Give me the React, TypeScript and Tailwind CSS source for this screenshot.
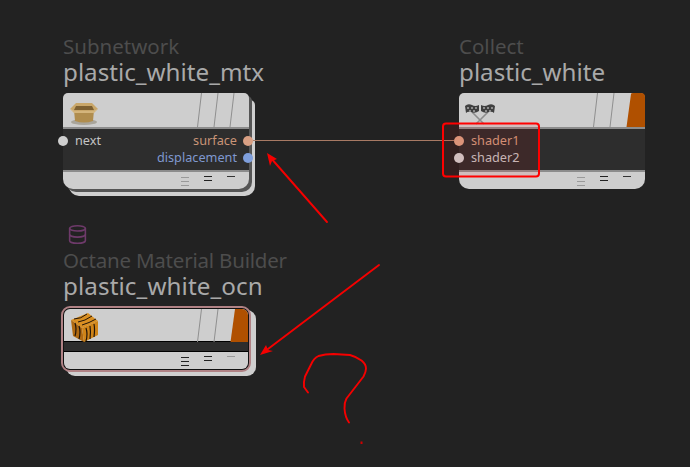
import React from "react";
import { Database } from "lucide-react";

type Port = { name: string; text: string; dot: string };

const BoxIcon = () => (
  <svg width="30" height="26" viewBox="0 0 30 26" className="absolute left-[6px] top-[7px]">
    <ellipse cx="15" cy="22" rx="13" ry="3" fill="#a9a59b" />
    <path d="M5 10 L25 10 L24 21 Q15 24 6 21 Z" fill="#b08d4e" />
    <path d="M1 9 L7 3 L23 3 L29 9 L25 11 L5 11 Z" fill="#c9a76a" />
    <path d="M7 6 L23 6 L25 10 L5 10 Z" fill="#7d6031" />
    <path d="M1 9 L5 11 L25 11 L29 9 L25 13 L5 13 Z" fill="#d4b57c" />
  </svg>
);

const FlagsIcon = () => (
  <svg width="32" height="26" viewBox="0 0 32 26" className="absolute left-[5px] top-[7px]">
    <path d="M8 12 L20 24 M24 12 L12 24" stroke="#8d8d8d" strokeWidth="1.6" />
    <path d="M1 6 Q4 3 8 5 Q11 7 15 5 L15 11 Q11 14 7 12 Q4 11 2 13 Z" fill="#3f3f3f" />
    <path d="M17 5 Q21 7 24 5 Q28 3 31 6 L30 13 Q28 11 25 12 Q21 14 17 11 Z" fill="#3f3f3f" />
    <path d="M3 7 h2 v2 h-2 Z M7 7 h2 v2 h-2 Z M11 7 h2 v2 h-2 Z M5 10 h2 v2 h-2 Z M9 10 h2 v2 h-2 Z M19 7 h2 v2 h-2 Z M23 7 h2 v2 h-2 Z M27 7 h2 v2 h-2 Z M21 10 h2 v2 h-2 Z M25 10 h2 v2 h-2 Z" fill="#8e8e8e" />
  </svg>
);

const TigerIcon = () => (
  <svg width="30" height="32" viewBox="0 0 30 32" className="absolute left-[6px] top-[3px]">
    <path d="M1 8 L18 1 L28 9 L12 16 Z" fill="#d98f22" />
    <path d="M1 8 L12 16 L14 30 L3 24 Z" fill="#b06a12" />
    <path d="M12 16 L28 9 L28 23 L14 30 Z" fill="#cf8418" />
    <path d="M4 7 Q11 7 17 2 M8 10 Q15 9 22 4 M12 13 Q19 11 26 7" stroke="#22150a" strokeWidth="1" fill="none" />
    <path d="M5 11 Q7 17 5 24 M9 14 Q11 20 9 27 M16 16 Q18 22 16 29 M20 14 Q21 20 20 27 M24 12 Q25 17 24 25" stroke="#22150a" strokeWidth="1.2" fill="none" />
  </svg>
);

const FooterBars = ({ dark }: { dark?: boolean }) => {
  const first = dark ? "bg-[#222222]" : "bg-[#9a9a9a]";
  const last = dark ? "bg-[#9a9a9a]" : "bg-[#333333]";
  return (
    <div className={`h-full pt-[4px] flex items-start gap-[15px] ${dark ? "pl-[117px]" : "pl-[118px]"}`}>
      <div className="flex flex-col gap-[3px] w-[8px] pt-px">
        <div className={`h-px ${first}`} />
        <div className={`h-px ${first}`} />
        <div className={`h-px ${first}`} />
      </div>
      <div className="flex flex-col gap-[3px] w-[8px]">
        <div className="h-px bg-[#222222]" />
        <div className="h-px bg-[#222222]" />
      </div>
      <div className="w-[8px] h-px">
        <div className={`h-px ${last}`} />
      </div>
    </div>
  );
};

const PortLabel = ({ port, right }: { port: Port; right?: boolean }) => (
  <span className={port.text}>
    {port.name}
    <span
      className={`absolute top-[4px] size-[10px] rounded-full ${right ? "right-[-4px]" : "left-[-5px]"} ${port.dot}`}
    />
  </span>
);

const PortRow = ({ left, right }: { left?: Port; right?: Port }) => (
  <div className="relative h-[17px] pl-[12px] pr-[12px] flex justify-between text-[12.7px] leading-[17px]">
    <span>{left && <PortLabel port={left} />}</span>
    <span>{right && <PortLabel port={right} right />}</span>
  </div>
);

const NodeLabel = ({ type, name, wide }: { type: string; name: string; wide?: boolean }) => (
  <div className={`whitespace-nowrap ${wide ? "mb-[7px]" : "mb-[8px]"}`}>
    <div className={`text-[20.5px] leading-[25px] text-[#4d4d4d] ${wide ? "tracking-[-0.2px]" : ""}`}>{type}</div>
    <div className={`text-[24.2px] leading-[26px] text-[#a9a9a9] ${wide ? "tracking-[0.1px]" : ""}`}>{name}</div>
  </div>
);

const App = () => {
  const surface = { name: "surface", text: "text-[#c99477]", dot: "bg-[#d9a084]" };
  const displacement = { name: "displacement", text: "text-[#7f98cf]", dot: "bg-[#7f9fdc]" };
  const next = { name: "next", text: "text-[#c4c4c4]", dot: "bg-[#cfcfcf]" };
  const shader1 = { name: "shader1", text: "text-[#d09a7e]", dot: "bg-[#d9a084]" };
  const shader2 = { name: "shader2", text: "text-[#c4c4c4]", dot: "bg-[#cfcfcf]" };

  return (
    <div className="relative w-[690px] h-[467px] overflow-hidden bg-[#222222] font-['Noto_Sans',sans-serif]">
      {/* subnetwork */}
      <div className="absolute left-[63px] top-[34px] w-[186px]">
        <NodeLabel type="Subnetwork" name="plastic_white_mtx" />
        <div className="h-[96px] flex flex-col rounded-t-[5px] rounded-b-[10px] bg-[#cecece] shadow-[3px_3px_0_#555555,6px_7px_0_#cfcfcf]">
          <div className="relative h-[36px] border-b-2 border-[#8c8c8c]">
            <BoxIcon />
            <svg width="186" height="34" viewBox="0 0 186 34" className="absolute left-0 top-0">
              <path d="M134.5 34 L138.5 0 M151 34 L155 0 M167 34 L171 0" stroke="#8f8f8f" strokeWidth="1" />
            </svg>
          </div>
          <div className="h-[43px] pt-[3px] bg-[#2d2d2d] border-b-2 border-[#8c8c8c]">
            <PortRow left={next} right={surface} />
            <PortRow right={displacement} />
          </div>
          <div className="h-[17px]">
            <FooterBars />
          </div>
        </div>
      </div>

      {/* collect */}
      <div className="absolute left-[459px] top-[34px] w-[186px]">
        <NodeLabel type="Collect" name="plastic_white" />
        <div className="h-[96px] flex flex-col rounded-t-[5px] rounded-b-[10px] bg-[#cecece]">
          <div className="relative h-[36px] border-b-2 border-[#8c8c8c]">
            <FlagsIcon />
            <svg width="186" height="34" viewBox="0 0 186 34" className="absolute left-0 top-0">
              <path d="M134.5 34 L138.5 0 M151 34 L155 0" stroke="#8f8f8f" strokeWidth="1" />
              <path d="M167.5 34 L172 1 Q172 0 174 0 L182 0 Q186 0 186 4 L186 34 Z" fill="#b05000" />
            </svg>
          </div>
          <div className="h-[43px] pt-[3px] bg-[#2d2d2d] border-b-2 border-[#8c8c8c]">
            <PortRow left={shader1} />
            <PortRow left={shader2} />
          </div>
          <div className="h-[17px]">
            <FooterBars />
          </div>
        </div>
      </div>

      {/* octane builder */}
      <div className="absolute left-[63px] top-[224px] w-[190px]">
        <Database size={21} strokeWidth={1.8} className="ml-[4px] mb-[3px] text-[#6e3a6a]" />
        <NodeLabel type="Octane Material Builder" name="plastic_white_ocn" wide />
        <div className="-ml-[2px] w-[190px] h-[66px] rounded-[9px] border-2 border-[#b08285] bg-[#111111] p-px shadow-[5px_4px_0_#cfcfcf]">
          <div className="h-full flex flex-col rounded-[6px] bg-[#cecece] overflow-hidden">
            <div className="relative h-[33px] border-b border-black">
              <TigerIcon />
              <svg width="186" height="33" viewBox="0 0 186 33" className="absolute left-0 top-0">
                <path d="M133.5 33 L137.5 0 M150 33 L154 0" stroke="#8f8f8f" strokeWidth="1" />
                <path d="M166.5 33 L171 0 L186 0 L186 33 Z" fill="#b05000" />
              </svg>
            </div>
            <div className="h-[10px] bg-[#2d2d2d] border-b border-black" />
            <div className="h-[17px]">
              <FooterBars dark />
            </div>
          </div>
        </div>
      </div>

      {/* wire and hand drawn marks */}
      <svg width="690" height="467" viewBox="0 0 690 467" fill="none" className="absolute left-0 top-0">
        <path d="M253 140.5 H454" stroke="#a87a64" strokeWidth="1.2" />
        <rect x="443" y="123.5" width="96" height="53" rx="3" fill="#ff0000" fillOpacity="0.08" stroke="#ff0000" strokeWidth="2" />
        <g stroke="#f50000" strokeWidth="1.9" strokeLinecap="round" strokeLinejoin="round">
          <path d="M327 222 L270 157" />
          <path d="M379 265 L264 352" />
          <path d="M308 392.5 L304 387 Q303.5 382 305 376.5 L311.5 363.5 Q314 358 318.5 356 Q325 354 333.5 354 L350 355 Q357 357 361.5 360.5 Q366 364 366 368.5 Q366 372 363.5 376.5 L346.5 398.5 Q344 403 344.5 408.5 Q345 417 349 422.5" />
        </g>
        <path d="M267 153 L277 159 L272 161 L270 166 Z" fill="#f50000" />
        <path d="M260 355 L266 345 L268 350 L273 351 Z" fill="#f50000" />
        <rect x="360.5" y="441.5" width="2" height="2.5" fill="#d00000" />
      </svg>
    </div>
  );
};

export default App;
